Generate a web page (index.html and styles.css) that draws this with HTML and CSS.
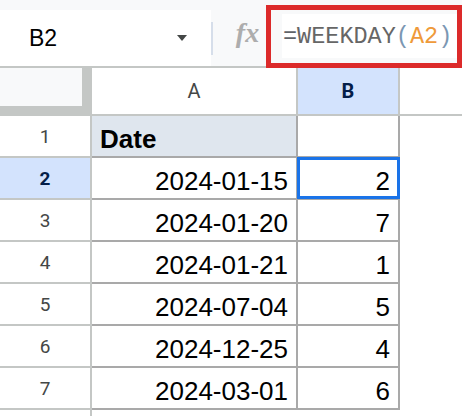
FILE: index.html
```html
<!DOCTYPE html>
<html lang="en">
<head>
    <meta charset="UTF-8">
    <meta name="viewport" content="width=device-width, initial-scale=1.0">
    <title>WEEKDAY</title>
    <link rel="stylesheet" href="styles.css">
</head>
<body>
    <div class="toolbar">
        <div class="name-box">
            <span class="cell-ref">B2</span>
            <span class="caret"></span>
        </div>
        <div class="divider"></div>
        <div class="fx">fx</div>
        <div class="formula"><span class="eq">=</span><span class="fn">WEEKDAY</span><span class="paren">(</span><span class="ref">A2</span><span class="paren">)</span></div>
        <div class="highlight"></div>
    </div>

    <div class="sheet">
        <div class="corner"><div class="corner-fill"></div></div>
        <div class="col-head">A</div>
        <div class="col-head active">B</div>
        <div class="col-head blank"></div>

        <div class="row-head">1</div>
        <div class="cell title">Date</div>
        <div class="cell"></div>
        <div class="empty"></div>

        <div class="row-head active">2</div>
        <div class="cell">2024-01-15</div>
        <div class="cell selected">2</div>
        <div class="empty"></div>

        <div class="row-head">3</div>
        <div class="cell">2024-01-20</div>
        <div class="cell">7</div>
        <div class="empty"></div>

        <div class="row-head">4</div>
        <div class="cell">2024-01-21</div>
        <div class="cell">1</div>
        <div class="empty"></div>

        <div class="row-head">5</div>
        <div class="cell">2024-07-04</div>
        <div class="cell">5</div>
        <div class="empty"></div>

        <div class="row-head">6</div>
        <div class="cell">2024-12-25</div>
        <div class="cell">4</div>
        <div class="empty"></div>

        <div class="row-head">7</div>
        <div class="cell">2024-03-01</div>
        <div class="cell">6</div>
        <div class="empty"></div>

        <!-- ligne 8 à peine visible -->
        <div class="row-head"></div>
        <div class="empty"></div>
        <div class="empty"></div>
        <div class="empty"></div>
    </div>
</body>
</html>
```

FILE: styles.css
```css
body, html {
    margin: 0;
    padding: 0;
    background: #FFFFFF;
    font-family: "Liberation Sans", Arial, sans-serif;
    color: #000;
    overflow: hidden;
}

/* barre de formule */
.toolbar {
    position: relative;
    display: flex;
    height: 66px;
    background: #f8f9fa;
    border-bottom: 2px solid #c4c7c5;
}

.name-box {
    display: flex;
    align-items: center;
    box-sizing: border-box;
    width: 211px;
    height: 56px;
    margin-top: 10px;
    padding: 0 24px 0 29px;
    background: #fff;
}

.cell-ref {
    font-size: 23px;
}

.caret {
    margin-left: auto;
    width: 0;
    height: 0;
    border-left: 5px solid transparent;
    border-right: 5px solid transparent;
    border-top: 6px solid #444746;
}

.divider {
    width: 2px;
    height: 33px;
    margin-top: 22px;
    background: #d6deea;
}

.fx {
    display: flex;
    align-items: center;
    justify-content: center;
    width: 69px;
    font-family: "Liberation Serif", serif;
    font-style: italic;
    font-weight: bold;
    font-size: 28px;
    color: #adadad;
}

.formula {
    flex: 1;
    display: flex;
    align-items: center;
    height: 44px;
    margin-top: 14px;
    padding-left: 1px;
    background: #fff;
    font-family: "Liberation Mono", monospace;
    font-size: 23.5px;
    color: #666;
}

.formula .eq { color: #5f6368; }
.formula .paren { color: #7b97b3; }
.formula .ref { color: #ef9a3a; }

.highlight {
    position: absolute;
    left: 266px;
    top: 5px;
    width: 196px;
    height: 63px;
    box-sizing: border-box;
    border: 5px solid #dc2a2a;
}

/* grille */
.sheet {
    display: grid;
    grid-template-columns: 92px 206px 102px 1fr;
    grid-template-rows: 48px repeat(8, 42px);
}

.sheet > div {
    box-sizing: border-box;
}

.corner {
    background: #c4c7c5;
    border-right: 2px solid #c4c7c5;
}

.corner-fill {
    width: 82px;
    height: 38px;
    background: #f8f9fa;
}

.col-head {
    display: flex;
    align-items: center;
    justify-content: center;
    font-family: Roboto, "Liberation Sans", sans-serif;
    font-size: 20px;
    color: #444746;
    border-right: 2px solid #c4c7c5;
    border-bottom: 2px solid #c4c7c5;
}

.col-head.active {
    background: #d3e3fd;
    color: #041e49;
    font-weight: bold;
}

.col-head.blank {
    border-right: none;
}

.row-head {
    display: flex;
    align-items: center;
    justify-content: center;
    font-family: Roboto, "Liberation Sans", sans-serif;
    font-size: 19px;
    color: #444746;
    border-right: 2px solid #c4c7c5;
    border-bottom: 2px solid #c4c7c5;
}

.row-head.active {
    background: #d3e3fd;
    color: #041e49;
    font-weight: bold;
}

.cell {
    padding: 7px 8px 0 8px;
    line-height: 33px;
    font-size: 26px;
    text-align: right;
    border-right: 2px solid #a9a9a9;
    border-bottom: 2px solid #a9a9a9;
}

.cell.title {
    text-align: left;
    font-weight: bold;
    background: #dfe6ee;
}

.cell.selected {
    position: relative;
}

.cell.selected::after {
    content: "";
    position: absolute;
    left: -1px;
    top: -1px;
    right: -2px;
    bottom: -1px;
    border: 3px solid #1a73e8;
}
```
